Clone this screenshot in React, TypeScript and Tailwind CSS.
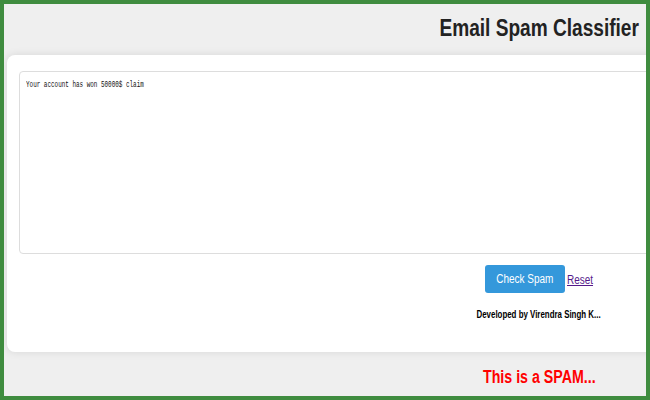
import React from 'react';

export default function App() {
  return (
    <div className="w-[650px] h-[400px] border-[4px] border-[#3f8c3f] bg-[#efefef] overflow-hidden font-['Liberation_Sans',Arial,sans-serif]">
      <div className="w-[1070px]">
        {/* Header */}
        <h1 className="mt-[10.5px] text-center text-[23px] leading-[26px] font-bold text-[#222]">
          <span className="inline-block scale-x-[0.83]">Email Spam Classifier</span>
        </h1>

        {/* Card */}
        <div className="mt-[14.5px] mx-[3px] bg-white rounded-[8px] shadow-[0_0_8px_rgba(0,0,0,0.1)] pt-[16px] px-[12px] pb-[31.5px]">
          <div className="h-[183px] border border-[#dddddd] rounded-[4px] px-[6px] pt-[7px]">
            <span className="block origin-left scale-x-[0.7] text-[8.5px] leading-[13px] text-[#111] font-['Liberation_Mono','DejaVu_Sans_Mono',monospace]">
              Your account has won 50000$ claim
            </span>
          </div>

          <div className="mt-[11px] flex justify-center items-center gap-[2px]">
            <button className="w-[80px] h-[28px] bg-[#3498db] rounded-[3px] text-white text-[12.5px] flex items-center justify-center">
              <span className="inline-block scale-x-[0.8]">Check Spam</span>
            </button>
            <div className="w-[26px] text-[12px] leading-[14px] mt-[1px]">
              <a href="#" className="inline-block origin-left scale-x-[0.83] text-[#551a8b] underline">Reset</a>
            </div>
          </div>

          <p className="mt-[15.5px] text-center text-[10px] leading-[12px] font-bold text-black">
            <span className="inline-block scale-x-[0.79]">Developed by Virendra Singh K...</span>
          </p>
        </div>

        {/* Result */}
        <h2 className="mt-[15px] text-center text-[18px] leading-[20px] font-bold text-[#ff0000]">
          <span className="inline-block scale-x-[0.79]">This is a SPAM...</span>
        </h2>
      </div>
    </div>
  );
}
